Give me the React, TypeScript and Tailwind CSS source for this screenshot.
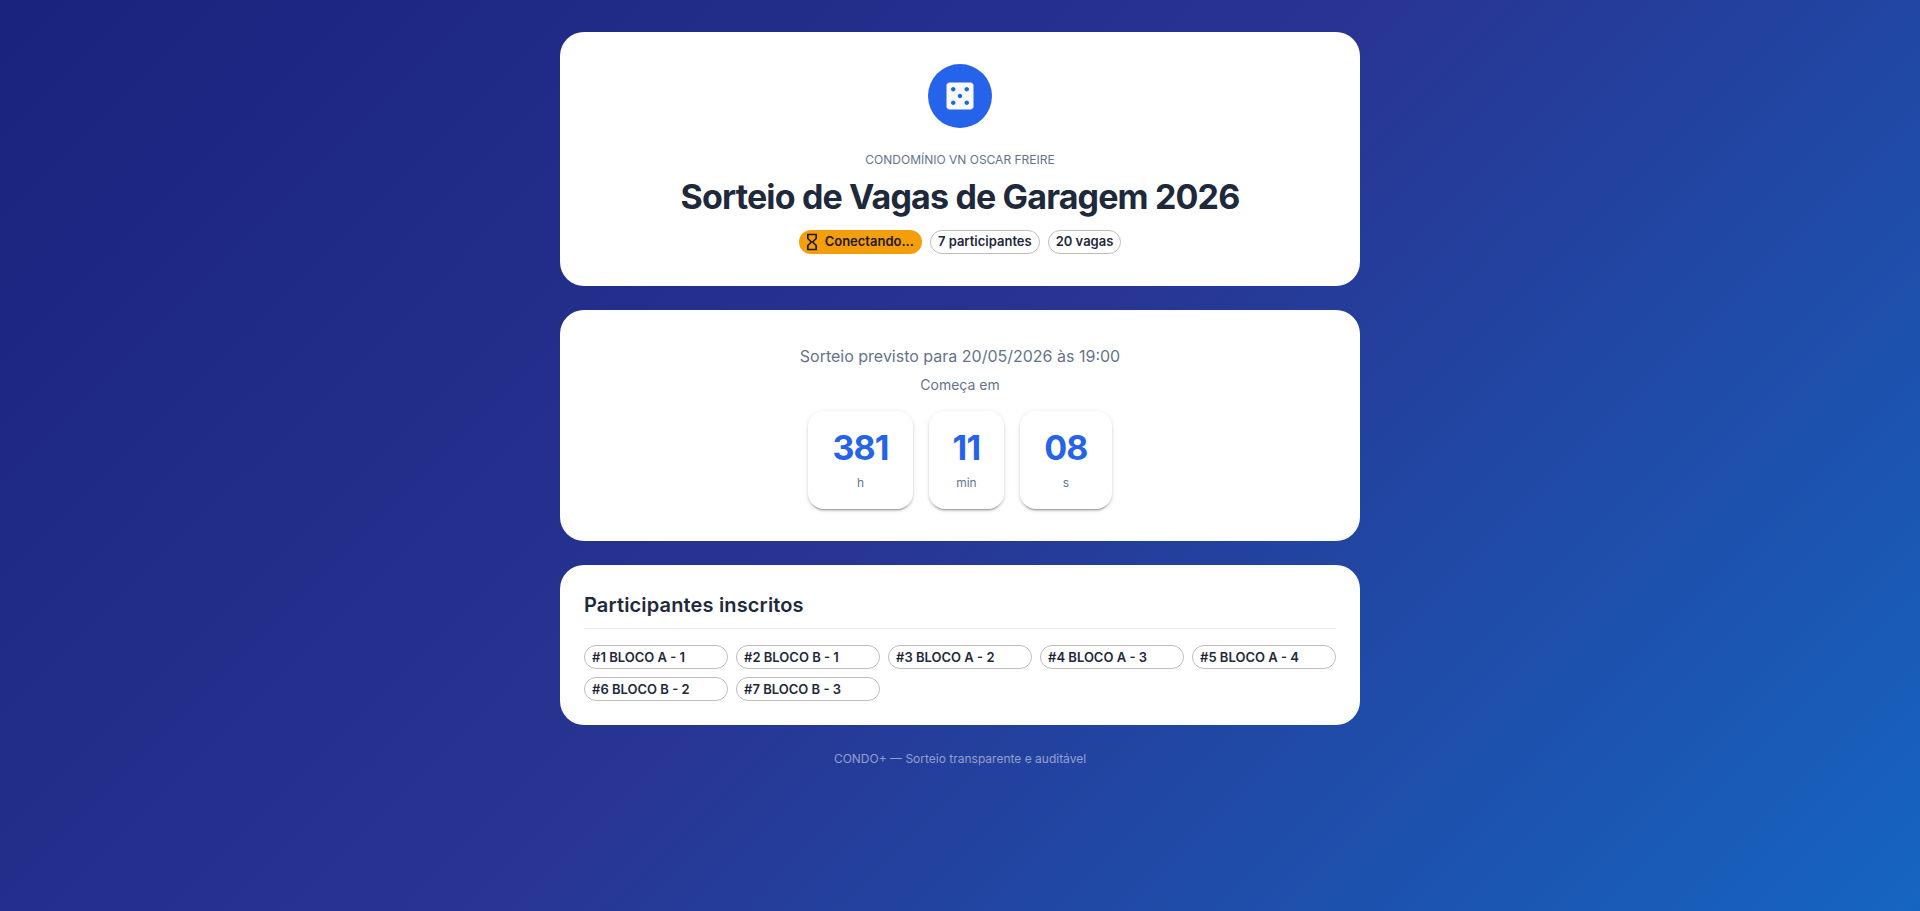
import type { ReactNode } from 'react';
import { MdCasino, MdHourglassEmpty } from 'react-icons/md';

const PARTICIPANTS = [
  'BLOCO A - 1',
  'BLOCO B - 1',
  'BLOCO A - 2',
  'BLOCO A - 3',
  'BLOCO A - 4',
  'BLOCO B - 2',
  'BLOCO B - 3',
];

const COUNTDOWN = [
  { value: '381', unit: 'h' },
  { value: '11', unit: 'min' },
  { value: '08', unit: 's' },
];

export default function App() {
  return (
    <div className="min-h-screen bg-[linear-gradient(135deg,#1a237e_0%,#283593_50%,#1565c0_100%)] py-8 font-['Inter',sans-serif] text-[#1e293b]">
      <main className="mx-auto flex w-[800px] flex-col gap-6">
        <Card className="flex h-[254px] flex-col items-center p-8">
          <div className="flex size-16 items-center justify-center rounded-full bg-[#2563eb] text-[#f8fafc]">
            <MdCasino size={36} />
          </div>
          <p className="mt-[22px] text-xs leading-5 text-[#64748b] uppercase">Condomínio VN Oscar Freire</p>
          <h1 className="mt-1.5 text-[34px] leading-[42px] font-bold tracking-[-0.85px]">
            Sorteio de Vagas de Garagem 2026
          </h1>
          <div className="mt-auto flex gap-2">
            <span className="flex h-6 items-center rounded-full bg-[#f59e0b] pr-2 pl-[3px] text-[13px] font-semibold text-[#1c1917]">
              <MdHourglassEmpty size={20} className="mr-[3px]" />
              Conectando...
            </span>
            <Chip>7 participantes</Chip>
            <Chip>20 vagas</Chip>
          </div>
        </Card>

        <Card className="flex h-[231px] flex-col items-center p-8">
          <p className="text-base leading-7 text-[#64748b]">Sorteio previsto para 20/05/2026 às 19:00</p>
          <p className="mt-[3px] text-sm leading-6 text-[#64748b]">Começa em</p>
          <div className="mt-auto flex gap-4">
            {COUNTDOWN.map((c) => (
              <CountdownBox key={c.unit} value={c.value} unit={c.unit} />
            ))}
          </div>
        </Card>

        <Card className="h-[160px] p-6">
          <h2 className="text-xl leading-8 font-semibold tracking-[0.15px]">Participantes inscritos</h2>
          <hr className="mt-[7px] mb-4 border-[#e2e8f0]" />
          <div className="grid grid-cols-5 gap-2">
            {PARTICIPANTS.map((name, i) => (
              <Chip key={name} className="pt-0.5">
                #{i + 1} {name}
              </Chip>
            ))}
          </div>
        </Card>
      </main>

      <footer className="mt-6 text-center text-xs leading-5 text-white/50">
        CONDO+ — Sorteio transparente e auditável
      </footer>
    </div>
  );
}

function Card({ className, children }: { className: string; children: ReactNode }) {
  return <section className={`rounded-3xl bg-white ${className}`}>{children}</section>;
}

function Chip({ className = '', children }: { className?: string; children: ReactNode }) {
  return (
    <span
      className={`flex h-6 items-center rounded-full border border-[#bdbdbd] px-[7px] text-[13px] font-semibold whitespace-pre ${className}`}
    >
      {children}
    </span>
  );
}

function CountdownBox({ value, unit }: { value: string; unit: string }) {
  return (
    <div className="flex h-[98px] flex-col items-center rounded-2xl px-6 pt-4 shadow-[0_3px_1px_-2px_rgba(0,0,0,0.2),0_2px_2px_0_rgba(0,0,0,0.14),0_1px_5px_0_rgba(0,0,0,0.12)]">
      <span className="text-[34px] leading-[42px] font-bold tracking-[-0.85px] text-[#2563eb]">{value}</span>
      <span className="mt-1 text-xs leading-5 text-[#64748b]">{unit}</span>
    </div>
  );
}
